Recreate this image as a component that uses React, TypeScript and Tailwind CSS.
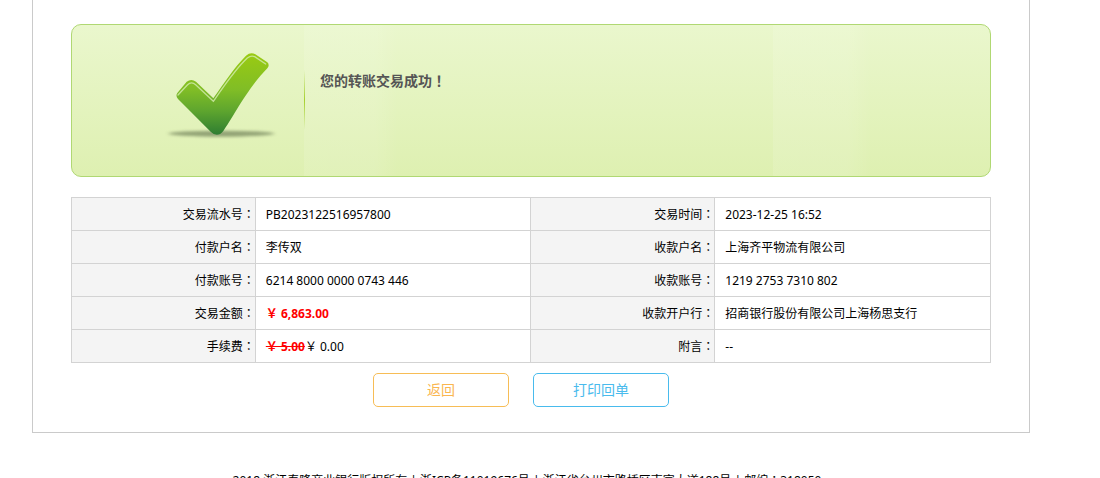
import type { ReactNode } from 'react';

interface Row {
  label: string;
  value: ReactNode;
  label2: string;
  value2: ReactNode;
}

const rows: Row[] = [
  { label: '交易流水号', value: 'PB2023122516957800', label2: '交易时间', value2: '2023-12-25 16:52' },
  { label: '付款户名', value: '李传双', label2: '收款户名', value2: '上海齐平物流有限公司' },
  { label: '付款账号', value: '6214 8000 0000 0743 446', label2: '收款账号', value2: '1219 2753 7310 802' },
  {
    label: '交易金额',
    value: <strong className="font-bold text-[#ff0000]">￥ 6,863.00</strong>,
    label2: '收款开户行',
    value2: '招商银行股份有限公司上海杨思支行',
  },
  {
    label: '手续费',
    value: (
      <>
        <del className="font-bold text-[#ff0000]">￥ 5.00</del>￥ 0.00
      </>
    ),
    label2: '附言',
    value2: '--',
  },
];

const SuccessIcon = () => (
  <svg width="120" height="100" viewBox="0 0 360 300" aria-hidden="true">
    <defs>
      <linearGradient id="tick" x1="0" y1="0" x2="0" y2="1">
        <stop offset="0" stopColor="#9acb12" />
        <stop offset="0.45" stopColor="#80bd26" />
        <stop offset="0.7" stopColor="#5fa62e" />
        <stop offset="1" stopColor="#2e7d32" />
      </linearGradient>
      <filter id="soft" x="-10%" y="-100%" width="120%" height="300%">
        <feGaussianBlur stdDeviation="7 4" />
      </filter>
    </defs>
    <ellipse cx="184" cy="266" rx="158" ry="9" fill="#5f7048" opacity="0.6" filter="url(#soft)" />
    <path
      d="M52 144 Q46 153 54 162 L152 260 Q172 280 190 258 C216 222 262 130 322 70 Q330 60 322 52 L286 28 Q272 20 258 32 C222 68 192 115 160 160 L108 110 Q94 100 80 110 Z"
      fill="url(#tick)"
    />
    <path
      d="M54 150 L82 120 Q94 108 107 119 L160 169 C194 120 226 72 262 39 Q273 30 284 35 L317 57"
      fill="none"
      stroke="#d5ecb0"
      strokeWidth="4"
      strokeLinecap="round"
      opacity="0.8"
    />
  </svg>
);

// The TC face centres full-width punctuation in its box
const Mark = ({ children }: { children: ReactNode }) => (
  <span lang="zh-TW" className="font-['Noto_Sans_CJK_TC',sans-serif] leading-none">
    {children}
  </span>
);

const Label = ({ children }: { children: ReactNode }) => (
  <th scope="row" className="w-1/5 border border-[#d3d3d3] bg-[#f4f4f4] pt-[9px] pb-[7px] text-right leading-4 font-normal">
    {children}
    <Mark>：</Mark>
  </th>
);

const Value = ({ children }: { children: ReactNode }) => (
  <td className="w-[30%] border border-[#d3d3d3] pt-[9px] pb-[7px] pl-2.5 text-left leading-4">{children}</td>
);

const App = () => {
  return (
    <div lang="zh-CN" className="bg-white font-['Noto_Sans','Noto_Sans_CJK_SC',sans-serif] text-xs text-black">
      <main className="ml-8 mr-[70px] border border-t-0 border-[#cacaca] px-[38px] pt-6 pb-[25px]">
        <section className="flex h-[153px] rounded-[10px] border border-[#b0d873] bg-[linear-gradient(90deg,transparent_25.3%,#ffffff1c_25.3%,#ffffff1a_33%,transparent_35.5%,transparent_76.4%,#ffffff1c_76.4%,#ffffff1a_84.5%,transparent_87%),linear-gradient(180deg,#eaf7cd,#def0b1)]">
          <div className="flex w-[232px] shrink-0 justify-end pt-5 pr-6">
            <SuccessIcon />
          </div>
          <div className="mt-[45px] h-[60px] w-px bg-linear-to-b from-transparent via-[#a5d02e] to-transparent" />
          <h1 className="mt-[46px] ml-[15px] text-sm leading-5 font-bold text-[#555]">
            您的转账交易成功<Mark>！</Mark>
          </h1>
        </section>

        <table className="mt-5 w-full table-fixed border-collapse">
          <tbody>
            {rows.map((row) => (
              <tr key={row.label}>
                <Label>{row.label}</Label>
                <Value>{row.value}</Value>
                <Label>{row.label2}</Label>
                <Value>{row.value2}</Value>
              </tr>
            ))}
          </tbody>
        </table>

        <div className="mt-2.5 flex justify-center gap-6 pr-5">
          <button type="button" className="h-[34px] w-[136px] rounded-[5px] border border-[#f7bd56] text-sm text-[#fab650]">
            返回
          </button>
          <button type="button" className="h-[34px] w-[136px] rounded-[5px] border border-[#49bbed] text-sm text-[#49bbed]">
            打印回单
          </button>
        </div>
      </main>

      <footer className="mt-[38px] pr-[46px] text-center leading-5">
        2018 浙江泰隆商业银行版权所有 | 浙ICP备11019676号 | 浙江省台州市路桥区南官大道188号 | 邮编<Mark>：</Mark>318050
      </footer>
    </div>
  );
};

export default App;
